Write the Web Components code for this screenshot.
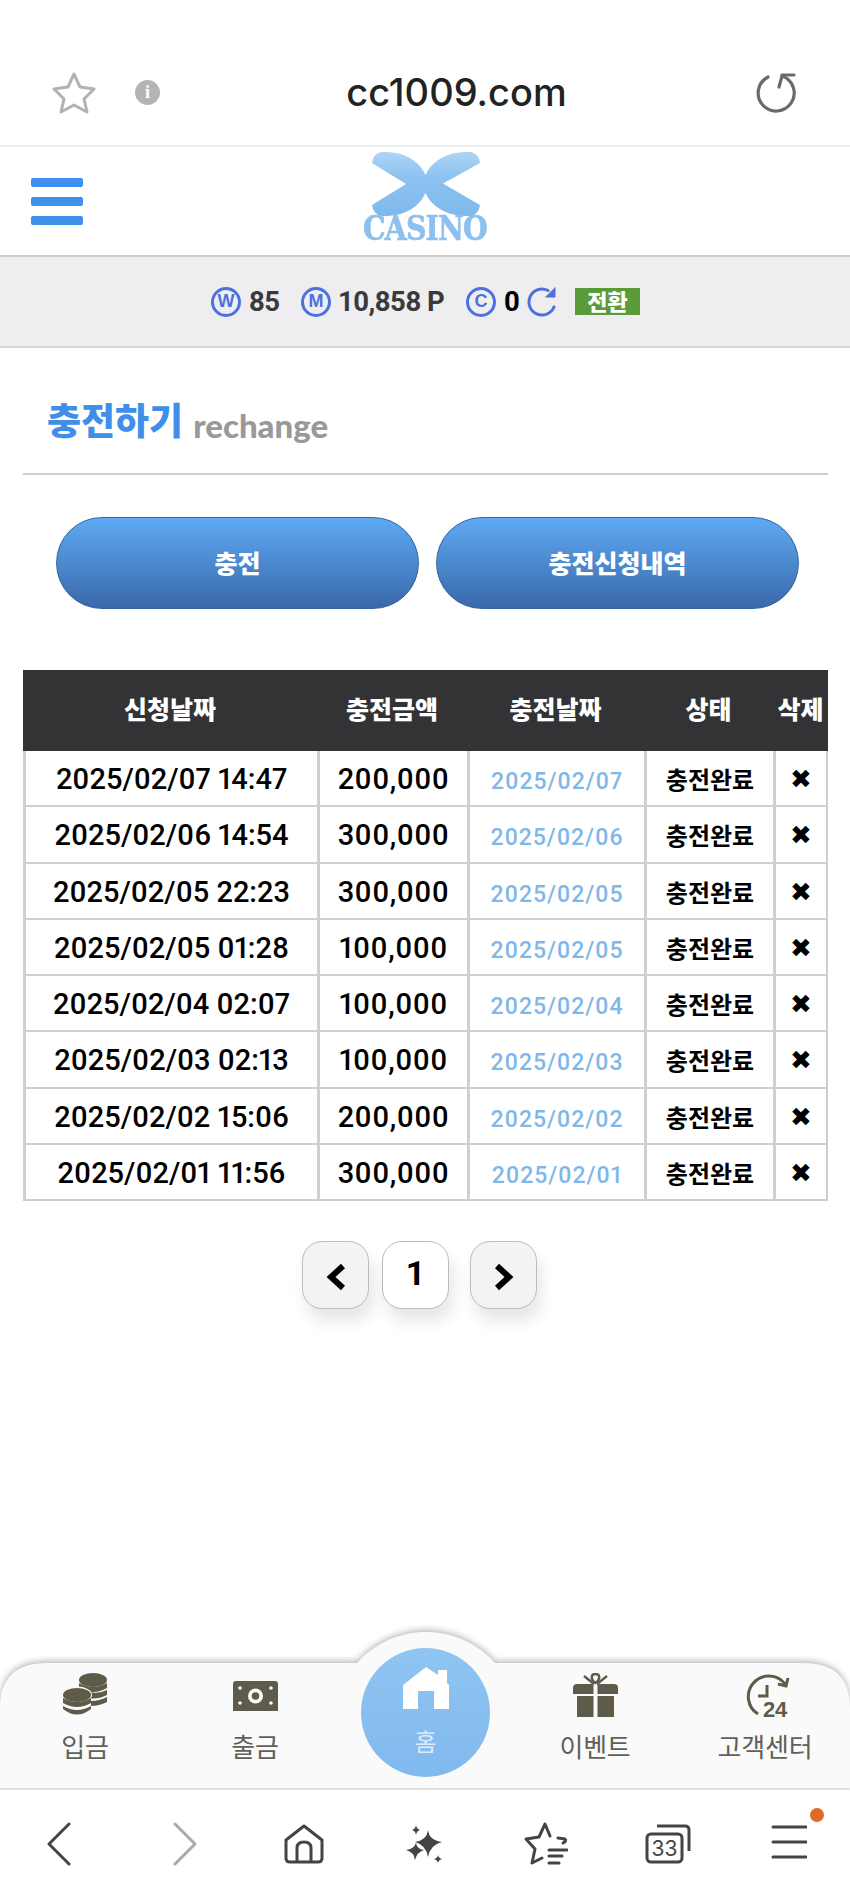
<!DOCTYPE html>
<html lang="ko">
<head>
<meta charset="utf-8">
<title>cc1009.com</title>
<style>
  html, body { margin: 0; padding: 0; background: #fff; }
  body {
    width: 850px;
    height: 1898px;
    display: flex;
    flex-direction: column;
    overflow: hidden;
    font-family: Roboto, "Noto Sans CJK KR", sans-serif;
  }
  bottom-menu { margin-top: auto; }
</style>
</head>
<body>
  <browser-top url="cc1009.com"></browser-top>
  <site-header></site-header>
  <balance-bar></balance-bar>
  <page-title label="충전하기" sub="rechange"></page-title>
  <action-buttons></action-buttons>
  <charge-table></charge-table>
  <pager-nav></pager-nav>
  <bottom-menu></bottom-menu>
  <browser-bottom></browser-bottom>

<script>
const KR = `"Noto Sans CJK KR", sans-serif`;

class BrowserTop extends HTMLElement {
  constructor() {
    super();
    this.attachShadow({ mode: "open" });
    this.shadowRoot.innerHTML = `
    <style>
      :host { display: block; height: 145px; border-bottom: 2px solid #ececec; }
      .bar { height: 145px; padding: 72px 54px 0 52px; box-sizing: border-box; display: flex; align-items: flex-start; }
      .url { flex: 1; text-align: center; font: 500 38px/46px Inter, sans-serif; color: #222; margin-top: -3px; padding-right: 3px; }
      .info { width: 25px; height: 25px; border-radius: 50%; background: #b4b4b4; color: #fff; font: 700 18px/25px "Liberation Serif", serif; text-align: center; margin: 8px 0 0 39px; }
      svg { display: block; }
    </style>
    <div class="bar">
      <svg width="44" height="42" viewBox="0 0 44 42" fill="none" stroke="#b2b2b2" stroke-width="3" stroke-linejoin="round">
        <path d="M22 2 L28 15 L42 17 L32 27 L35 40 L22 33 L9 40 L12 27 L2 17 L16 15 Z"/>
      </svg>
      <div class="info">i</div>
      <div class="url"></div>
      <svg width="40" height="42" viewBox="0 0 40 42" fill="none" stroke="#6a6a6a" stroke-width="3.2" stroke-linecap="round" stroke-linejoin="round">
        <path d="M12 5 A18 18 0 1 0 26 4 L23 15"/>
        <path d="M26 3 L38 3"/>
      </svg>
    </div>`;
    this.shadowRoot.querySelector(".url").textContent = this.getAttribute("url");
  }
}

class SiteHeader extends HTMLElement {
  constructor() {
    super();
    this.attachShadow({ mode: "open" });
    this.shadowRoot.innerHTML = `
    <style>
      :host { display: block; height: 108px; border-bottom: 2px solid #cfcfd2; }
      .wrap { position: relative; height: 108px; display: flex; justify-content: center; padding-top: 5px; box-sizing: border-box; }
      .menu { position: absolute; left: 31px; top: 31px; width: 52px; display: flex; flex-direction: column; gap: 10px; }
      .menu i { display: block; height: 9px; border-radius: 2px; background: #3f8fec; }
      .logo { display: flex; flex-direction: column; align-items: center; width: 130px; margin-left: 1px; }
      .logo svg { display: block; }
      .logo b {
        font: 700 33px/26px "DejaVu Serif", serif;
        letter-spacing: -1px;
        color: #8cc0ee;
        -webkit-text-stroke: .6px #8cc0ee;
        transform: scaleX(.86);
        white-space: nowrap;
      }
    </style>
    <div class="wrap">
      <div class="menu"><i></i><i></i><i></i></div>
      <div class="logo">
        <svg width="108" height="64" viewBox="0 0 108 64">
          <defs>
            <linearGradient id="lg" x1="0" y1="0" x2="0" y2="1">
              <stop offset="0" stop-color="#aed4f5"/><stop offset=".4" stop-color="#8cc2f0"/><stop offset="1" stop-color="#7fb9ec"/>
            </linearGradient>
          </defs>
          <path fill="url(#lg)" d="M0 11 Q1 2 9 0 C28 -1 46 6 53.500 23 C61 6 80 -1 99 0 Q107 2 108 11 L71 31.500 L108 53 Q107 62 99 64 C80 65 61 58 53.500 41 C46 58 28 65 9 64 Q1 62 0 53 L34 32Z"/>
        </svg>
        <b>CASINO</b>
      </div>
    </div>`;
  }
}

class BalanceBar extends HTMLElement {
  constructor() {
    super();
    this.attachShadow({ mode: "open" });
    this.shadowRoot.innerHTML = `
    <style>
      :host { display: block; height: 89px; background: #eeeef0; border-bottom: 2px solid #d4d4d6; }
      .row { height: 89px; display: flex; align-items: center; padding-left: 211px; box-sizing: border-box; font: 700 27.5px/30px Roboto, sans-serif; color: #3a3a3c; letter-spacing: -.5px; white-space: nowrap; }
      .c { width: 30px; height: 30px; border: 3.5px solid #4d6fe0; border-radius: 50%; box-sizing: border-box; color: #4d6fe0; font: 700 18px/23px "Liberation Sans", sans-serif; text-align: center; letter-spacing: 0; flex: none; }
      .zero { color: #000; }
      .badge { width: 65px; height: 27px; background: #5a9a38; color: #fff; font: 900 22px/25px ${KR}; text-align: center; letter-spacing: 0; }
      svg { display: block; }
    </style>
    <div class="row">
      <span class="c">W</span><span style="margin:0 20px 0 8px;width:32px">85</span>
      <span class="c">M</span><span style="margin:0 22px 0 7px;width:106px">10,858 P</span>
      <span class="c">C</span><span class="zero" style="margin:0 9px 0 8px;width:14px">0</span>
      <svg width="29" height="30" viewBox="0 0 29 30" fill="none" stroke="#4d6fe0" stroke-width="3" stroke-linecap="round" stroke-linejoin="round" style="margin-right:19px">
        <path d="M21 3.500 A13 13 0 1 0 27 20"/><path d="M28 1 V10 H19Z" fill="#4d6fe0" stroke-width="1"/>
      </svg>
      <span class="badge">전환</span>
    </div>`;
  }
}

class PageTitle extends HTMLElement {
  constructor() {
    super();
    this.attachShadow({ mode: "open" });
    this.shadowRoot.innerHTML = `
    <style>
      :host { display: block; margin: 0 22px 0 23px; height: 125px; border-bottom: 2px solid #cfcfd2; }
      .t { height: 125px; display: flex; align-items: baseline; padding: 48px 0 0 24px; box-sizing: border-box; }
      b { font: 900 37px/46px ${KR}; color: #3f8fe8; }
      span { font: 900 33px/46px Lato, sans-serif; color: #999; margin-left: 10px; position: relative; top: 3px; }
    </style>
    <div class="t"><b></b><span></span></div>`;
    this.shadowRoot.querySelector("b").textContent = this.getAttribute("label");
    this.shadowRoot.querySelector("span").textContent = this.getAttribute("sub");
  }
}

class ActionButtons extends HTMLElement {
  constructor() {
    super();
    this.attachShadow({ mode: "open" });
    this.shadowRoot.innerHTML = `
    <style>
      :host { display: flex; gap: 17px; margin: 42px 0 0 56px; }
      a { width: 363px; height: 92px; box-sizing: border-box; border: 1px solid #36659f; border-radius: 46px; background: linear-gradient(#5eaaf3, #3a68aa); color: #fff; font: 900 25px/88px ${KR}; text-align: center; }
    </style>
    <a>충전</a><a>충전신청내역</a>`;
  }
}

const CHARGES = [
  ["2025/02/07 14:47", "200,000", "2025/02/07"],
  ["2025/02/06 14:54", "300,000", "2025/02/06"],
  ["2025/02/05 22:23", "300,000", "2025/02/05"],
  ["2025/02/05 01:28", "100,000", "2025/02/05"],
  ["2025/02/04 02:07", "100,000", "2025/02/04"],
  ["2025/02/03 02:13", "100,000", "2025/02/03"],
  ["2025/02/02 15:06", "200,000", "2025/02/02"],
  ["2025/02/01 11:56", "300,000", "2025/02/01"],
];

class ChargeTable extends HTMLElement {
  constructor() {
    super();
    this.attachShadow({ mode: "open" });
    const rows = CHARGES.map((r) => `
      <div class="row">
        <div>${r[0]}</div><div class="v">${r[1]}</div><div class="d">${r[2]}</div><div class="s">충전완료</div><div class="x">✖</div>
      </div>`).join("");
    this.shadowRoot.innerHTML = `
    <style>
      :host { display: block; margin: 61px 22px 0 23px; }
      .row, .head { display: grid; grid-template-columns: 294px 150px 177px 129px 55px; }
      .head { height: 81px; background: #333336; color: #fff; font: 900 25px/76px ${KR}; text-align: center; }
      .head div:last-child { white-space: nowrap; }
      .row { height: 56.3px; box-sizing: border-box; border-bottom: 2px solid #cfcfd2; font: 500 29px/51px Roboto, sans-serif; font-variant-numeric: proportional-nums; color: #000; text-align: center; }
      .row > div { border-left: 3px solid #cfcfd2; padding-top: 3px; }
      .row > div:last-child { border-right: 2px solid #cfcfd2; }
      .row .v { letter-spacing: .5px; }
      .row .d { font-size: 23px; color: #7fb8e8; padding-top: 8px; line-height: 46px; letter-spacing: .9px; }
      .row .s { font: 700 24px/49px ${KR}; }
      .row .x { font: 700 26px/51px "DejaVu Sans", sans-serif; }
    </style>
    <div class="head"><div>신청날짜</div><div>충전금액</div><div>충전날짜</div><div>상태</div><div>삭제</div></div>
    ${rows}`;
  }
}

class PagerNav extends HTMLElement {
  constructor() {
    super();
    this.attachShadow({ mode: "open" });
    this.shadowRoot.innerHTML = `
    <style>
      :host { display: flex; gap: 13px; margin: 40px 0 0 302px; }
      .b { width: 67px; height: 68px; box-sizing: border-box; border: 1.5px solid #bcbcbe; border-radius: 20px; background: #f3f3f5; box-shadow: 4px 12px 16px rgba(0,0,0,.1); display: flex; align-items: center; justify-content: center; font: 700 34px/1 Roboto, sans-serif; color: #000; padding-bottom: 4px; }
      .b.on { background: #fff; }
      .b + .b + .b { margin-left: 8px; }
      svg { display: block; margin-top: 8px; }
    </style>
    <div class="b"><svg width="20" height="28" viewBox="0 0 20 28" fill="none" stroke="#000" stroke-width="6"><path d="M17 3 L5 14 L17 25"/></svg></div>
    <div class="b on">1</div>
    <div class="b"><svg width="20" height="28" viewBox="0 0 20 28" fill="none" stroke="#000" stroke-width="6"><path d="M3 3 L15 14 L3 25"/></svg></div>`;
  }
}

class BottomMenu extends HTMLElement {
  constructor() {
    super();
    this.attachShadow({ mode: "open" });
    this.shadowRoot.innerHTML = `
    <style>
      :host { display: block; position: relative; height: 125px; border-bottom: 2px solid #ececec; }
      .bg { position: absolute; left: 0; top: -31px; display: block; filter: drop-shadow(0 -2px 3px rgba(0,0,0,.28)); }
      .items { position: relative; display: grid; grid-template-columns: repeat(5, 170px); height: 125px; }
      .item { display: flex; flex-direction: column; align-items: center; padding-top: 10px; font: 400 26px/34px ${KR}; color: #5f5f5b; letter-spacing: -.2px; }
      .ico { height: 45px; display: flex; align-items: flex-start; justify-content: center; margin-bottom: 11px; }
      svg { display: block; }
      .home { position: relative; }
      .circle { position: absolute; left: 21px; top: -15px; width: 129px; height: 129px; border-radius: 50%; background: linear-gradient(#8fc5f2, #80b9ee); display: flex; flex-direction: column; align-items: center; color: #dcebfa; font: 400 24px/30px ${KR}; box-sizing: border-box; padding-top: 19px; }
      .circle span { margin-top: 17px; }
    </style>
    <svg class="bg" width="850" height="156" viewBox="0 0 850 156">
      <path fill="#fafafa" d="M0 156 V76 Q0 31 47 31 H357 A92 92 0 0 1 495 31 H803 Q850 31 850 76 V156Z"/>
    </svg>
    <div class="items">
      <div class="item">
        <div class="ico">
          <svg width="44" height="44" viewBox="0 0 44 44" fill="#5f5b4b">
            <ellipse cx="30" cy="7" rx="14" ry="7"/>
            <path d="M16 10 Q30 18 44 10 V15 Q30 23 16 15Z"/>
            <path d="M22 18 Q34 22 44 17 V22 Q34 27 26 25Z"/>
            <path d="M28 28 Q36 28 44 24 V29 Q36 33 28 33Z"/>
            <ellipse cx="14" cy="22" rx="15" ry="8.500" fill="#fafafa"/>
            <ellipse cx="14" cy="22" rx="14" ry="7"/>
            <path d="M0 25 Q14 33 28 25 V30 Q14 38 0 30Z"/>
            <path d="M0 33 Q14 41 28 33 V36 Q14 47 0 36Z"/>
          </svg>
        </div>
        입금
      </div>
      <div class="item">
        <div class="ico">
          <svg width="45" height="30" viewBox="0 0 45 30" style="margin-top:8px">
            <path fill="#5f5b4b" d="M3 0 H42 Q45 0 45 3 V30 H0 V3 Q0 0 3 0Z"/>
            <circle cx="22.500" cy="15" r="7.500" fill="#fafafa"/><circle cx="22.500" cy="15" r="3.800" fill="#5f5b4b"/>
            <g fill="#fafafa"><circle cx="7" cy="7" r="1.800"/><circle cx="38" cy="7" r="1.800"/><circle cx="7" cy="22" r="1.800"/><circle cx="38" cy="22" r="1.800"/></g>
          </svg>
        </div>
        출금
      </div>
      <div class="item home">
        <div class="circle">
          <svg width="46" height="42" viewBox="0 0 46 42" fill="#fff">
            <path d="M23 0 L35 8 V3 H44 V16 L46 18 V42 H31 V24 H15 V42 H0 V18Z"/>
          </svg>
          <span>홈</span>
        </div>
      </div>
      <div class="item">
        <div class="ico">
          <svg width="45" height="44" viewBox="0 0 45 44" fill="#5f5b4b">
            <path d="M4 11 H20.500 V21 H0 V15 Q0 11 4 11Z"/>
            <path d="M41 11 H24.500 V21 H45 V15 Q45 11 41 11Z"/>
            <path d="M4 23 H20.500 V44 H4Z"/><path d="M24.500 23 H41 V44 H24.500Z"/>
            <g fill="none" stroke="#5f5b4b" stroke-width="2.400">
              <path d="M22.500 10 C17 6 18 1 22.500 1 C27 1 28 6 22.500 10Z"/>
              <path d="M21 11 L11 3"/><path d="M24 11 L34 3"/>
            </g>
          </svg>
        </div>
        이벤트
      </div>
      <div class="item">
        <div class="ico">
          <svg width="48" height="50" viewBox="0 0 48 50" fill="none" stroke="#5f5b4b" stroke-width="3" style="margin-left:6px">
            <path d="M41 11 A20.500 20.500 0 1 0 14 41"/>
            <path d="M44 5 L42 13 L34 11"/>
            <path d="M23 12 V23 H14"/>
            <text x="19" y="44" font-family="Liberation Sans, sans-serif" font-weight="700" font-size="22" fill="#5f5b4b" stroke="none">24</text>
          </svg>
        </div>
        고객센터
      </div>
    </div>`;
  }
}

class BrowserBottom extends HTMLElement {
  constructor() {
    super();
    this.attachShadow({ mode: "open" });
    this.shadowRoot.innerHTML = `
    <style>
      :host { display: block; height: 108px; position: relative; background: #fff; }
      .bar { display: flex; align-items: flex-start; height: 108px; padding: 32px 0 0 47px; box-sizing: border-box; }
      svg { display: block; flex: none; }
      .dot { position: absolute; left: 810px; top: 18px; width: 14px; height: 14px; border-radius: 50%; background: #e16a28; }
    </style>
    <div class="bar">
      <svg width="24" height="44" viewBox="0 0 24 44" fill="none" stroke="#444" stroke-width="3" stroke-linecap="round" stroke-linejoin="round"><path d="M22 2 L2 22 L22 42"/></svg>
      <svg width="24" height="44" viewBox="0 0 24 44" fill="none" stroke="#aaa" stroke-width="3" stroke-linecap="round" stroke-linejoin="round" style="margin-left:102px"><path d="M2 2 L22 22 L2 42"/></svg>
      <svg width="40" height="40" viewBox="0 0 40 40" fill="none" stroke="#444" stroke-width="3" stroke-linejoin="round" style="margin:2px 0 0 87px"><path d="M2 16 L20 2 L38 16 V34 Q38 38 34 38 H6 Q2 38 2 34Z"/><path d="M13 38 V24 Q13 18 20 18 Q27 18 27 24 V38"/></svg>
      <svg width="38" height="38" viewBox="0 0 38 38" fill="#444" style="margin:3px 0 0 82px">
        <path d="M22 5 Q23 15 36 17 Q24 20 22 32 Q20 20 9 17 Q21 15 22 5Z"/>
        <path d="M10 18 Q11 24 18 25 Q11 27 9 35 Q8 27 0 25 Q8 24 10 18Z"/>
        <path d="M10 0 Q10.500 4 14 5 Q10.500 6 10 10 Q9.500 6 6 5 Q9.500 4 10 0Z"/>
        <path d="M32 30 Q32.500 33 36 34 Q32.500 35 32 38 Q31.500 35 28 34 Q31.500 33 32 30Z"/>
      </svg>
      <svg width="44" height="44" viewBox="0 0 44 44" fill="none" stroke="#444" stroke-width="3" stroke-linejoin="round" stroke-linecap="round" style="margin-left:80px">
        <path d="M34 16 L41 17 Q43 19 39 21 M26 14 L21 2 L15 15 L2 17 L11 27 L8 41 L18 36"/>
        <path d="M25 28 H43 M25 34 H38 M25 41 H35"/>
      </svg>
      <svg width="46" height="40" viewBox="0 0 46 40" fill="none" stroke="#444" stroke-width="3" stroke-linejoin="round" style="margin:2px 0 0 77px">
        <rect x="2" y="10" width="35" height="28" rx="4"/>
        <path d="M12 2 H40 Q44 2 44 6 V27"/>
        <text x="19.500" y="32" font-family="Inter, sans-serif" font-size="21" font-weight="400" fill="#444" stroke="none" text-anchor="middle">33</text>
      </svg>
      <svg width="36" height="36" viewBox="0 0 36 36" fill="none" stroke="#444" stroke-width="3" stroke-linecap="round" style="margin:3px 0 0 80px"><path d="M2 2 H35 M2 17 H35 M2 32 H35"/></svg>
    </div>
    <div class="dot"></div>`;
  }
}

customElements.define("browser-top", BrowserTop);
customElements.define("site-header", SiteHeader);
customElements.define("balance-bar", BalanceBar);
customElements.define("page-title", PageTitle);
customElements.define("action-buttons", ActionButtons);
customElements.define("charge-table", ChargeTable);
customElements.define("pager-nav", PagerNav);
customElements.define("bottom-menu", BottomMenu);
customElements.define("browser-bottom", BrowserBottom);
</script>
</body>
</html>
